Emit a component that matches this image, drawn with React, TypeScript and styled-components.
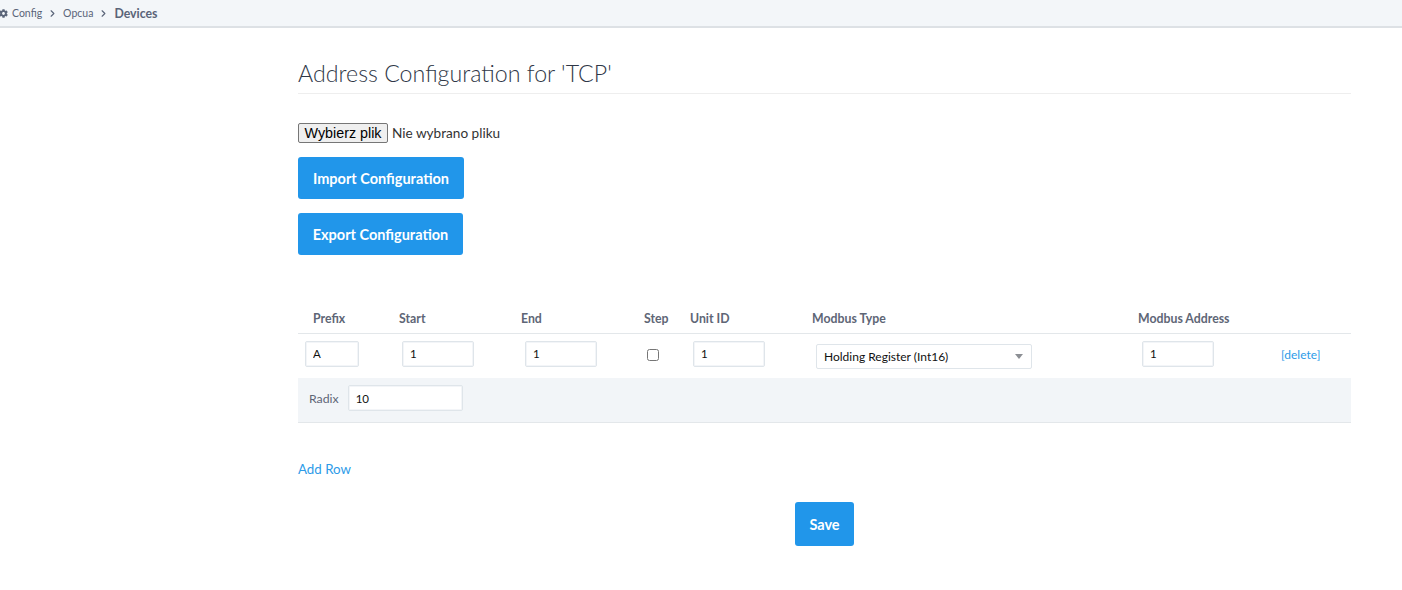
import React from 'react';
import styled, { createGlobalStyle } from 'styled-components';
import { FaCog } from 'react-icons/fa';
import { ChevronRight } from 'lucide-react';

const GlobalStyle = createGlobalStyle`
  html, body {
    margin: 0;
    padding: 0;
    background: #fff;
    font-family: Lato, "Noto Sans", sans-serif;
    font-size: 14px;
    color: #333;
  }
`;

const TopBar = styled.div`
  height: 26px;
  background: #f3f6f9;
  border-bottom: 2px solid #dde1e5;
  display: flex;
  align-items: center;
  overflow: hidden;
  color: #5a6478;
  font-size: 10.5px;
  svg.gear {
    width: 9px;
    height: 9px;
    margin-left: -1px;
    margin-right: 4px;
  }
  svg.sep {
    width: 11px;
    height: 11px;
    margin: 0 5px;
    color: #5a6478;
    stroke-width: 2.5;
  }
`;

const Current = styled.span`
  font-size: 12.3px;
  font-weight: 700;
`;

const Content = styled.div`
  margin-left: 298px;
  width: 1053px;
`;

const Title = styled.h3`
  margin: 31px 0 0;
  padding-bottom: 5px;
  height: 29px;
  line-height: 29px;
  font-size: 23.2px;
  font-weight: 300;
  color: #2f3747;
  border-bottom: 1px solid #eeeeee;
`;

const FileRow = styled.div`
  margin-top: 29px;
  display: flex;
  align-items: center;
  height: 20px;
  font-size: 13.6px;
  color: #333;
`;

const FileButton = styled.button`
  width: 90px;
  height: 20px;
  padding: 0;
  margin-right: 4px;
  font-family: "Liberation Sans", Arial, sans-serif;
  font-size: 14.3px;
  color: #000;
  background: #efefef;
  border: 1px solid #767676;
  border-radius: 2px;
`;

const Actions = styled.div`
  margin-top: 14px;
  display: flex;
  flex-direction: column;
  align-items: flex-start;
  gap: 14px;
`;

const Button = styled.button<{ $width: number; $height?: number }>`
  width: ${(p) => p.$width}px;
  height: ${(p) => p.$height || 42}px;
  padding: ${(p) => (p.$height ? '2px 0 0' : 0)};
  border: none;
  border-radius: 3px;
  background: #2196ea;
  color: #fff;
  font-family: inherit;
  font-size: 14.5px;
  font-weight: 700;
`;

const Table = styled.table`
  margin-top: 46px;
  width: 1053px;
  table-layout: fixed;
  border-collapse: collapse;
`;

const Th = styled.th<{ $width?: number }>`
  box-sizing: border-box;
  width: ${(p) => (p.$width ? `${p.$width}px` : 'auto')};
  height: 32px;
  padding: 3px 0 0 15px;
  text-align: left;
  font-size: 12.3px;
  font-weight: 700;
  color: #5e6676;
  border-bottom: 1px solid #e3e7ea;
  white-space: nowrap;
`;

const Td = styled.td<{ $pad?: number }>`
  box-sizing: border-box;
  height: 45px;
  padding: 0 0 4px ${(p) => (p.$pad === undefined ? 18 : p.$pad)}px;
  vertical-align: middle;
`;

const TextInput = styled.input<{ $width: number }>`
  display: block;
  box-sizing: border-box;
  width: ${(p) => p.$width}px;
  height: 26px;
  padding: 0 7px;
  border: 1px solid #dfe5ea;
  border-radius: 2px;
  box-shadow: inset 0 0 0 1px #f3f5f8;
  background: #fff;
  font-family: inherit;
  font-size: 11.5px;
  color: #111;
  outline: none;
`;

const Check = styled.input`
  display: block;
  width: 12px;
  height: 12px;
  margin: 2px 0 0;
`;

const SelectBox = styled.div`
  box-sizing: border-box;
  width: 216px;
  height: 25px;
  margin-top: 6px;
  padding: 0 7px 1px;
  display: flex;
  align-items: center;
  justify-content: space-between;
  border: 1px solid #dfe5ea;
  border-radius: 2px;
  font-size: 12px;
  color: #111;
  &::after {
    content: '';
    margin-right: 1px;
    border-left: 4px solid transparent;
    border-right: 4px solid transparent;
    border-top: 5px solid #8c8f94;
  }
`;

const DeleteLink = styled.a`
  font-size: 12px;
  color: #2d9be8;
`;

const OptionsCell = styled.td`
  box-sizing: border-box;
  height: 44px;
  padding: 0 0 0 11px;
  background: #f2f5f8;
  border-bottom: 1px solid #e3e7ea;
`;

const OptionRow = styled.div`
  display: flex;
  align-items: center;
  gap: 9px;
  margin-bottom: 3px;
  font-size: 12.3px;
  color: #5e6676;
`;

const AddRow = styled.a`
  display: block;
  margin-top: 37px;
  font-size: 13.3px;
  line-height: 18px;
  color: #2d9be8;
`;

const Footer = styled.div`
  margin-top: 24px;
  display: flex;
  justify-content: center;
  padding-bottom: 44px;
`;

export default function App() {
  return (
    <>
      <GlobalStyle />
      <TopBar>
        <FaCog className="gear" />
        <span>Config</span>
        <ChevronRight className="sep" />
        <span>Opcua</span>
        <ChevronRight className="sep" />
        <Current>Devices</Current>
      </TopBar>
      <Content>
        <Title>Address Configuration for 'TCP'</Title>
        <FileRow>
          <FileButton type="button">Wybierz plik</FileButton>
          <span>Nie wybrano pliku</span>
        </FileRow>
        <Actions>
          <Button $width={166}>Import Configuration</Button>
          <Button $width={165}>Export Configuration</Button>
        </Actions>
        <Table>
          <thead>
            <tr>
              <Th $width={86}>Prefix</Th>
              <Th $width={122}>Start</Th>
              <Th $width={123}>End</Th>
              <Th $width={46}>Step</Th>
              <Th $width={122}>Unit ID</Th>
              <Th $width={326}>Modbus Type</Th>
              <Th $width={138}>Modbus Address</Th>
              <Th />
            </tr>
          </thead>
          <tbody>
            <tr>
              <Td $pad={7}><TextInput $width={54} defaultValue="A" /></Td>
              <Td><TextInput $width={72} defaultValue="1" /></Td>
              <Td $pad={19}><TextInput $width={72} defaultValue="1" /></Td>
              <Td $pad={18}><Check type="checkbox" /></Td>
              <Td><TextInput $width={72} defaultValue="1" /></Td>
              <Td $pad={19}><SelectBox>Holding Register (Int16)</SelectBox></Td>
              <Td $pad={19}><TextInput $width={72} defaultValue="1" /></Td>
              <Td $pad={20}><DeleteLink>[delete]</DeleteLink></Td>
            </tr>
            <tr>
              <OptionsCell colSpan={8}>
                <OptionRow>
                  <span>Radix</span>
                  <TextInput $width={115} defaultValue="10" />
                </OptionRow>
              </OptionsCell>
            </tr>
          </tbody>
        </Table>
        <AddRow>Add Row</AddRow>
        <Footer>
          <Button $width={59} $height={44}>Save</Button>
        </Footer>
      </Content>
    </>
  );
}
